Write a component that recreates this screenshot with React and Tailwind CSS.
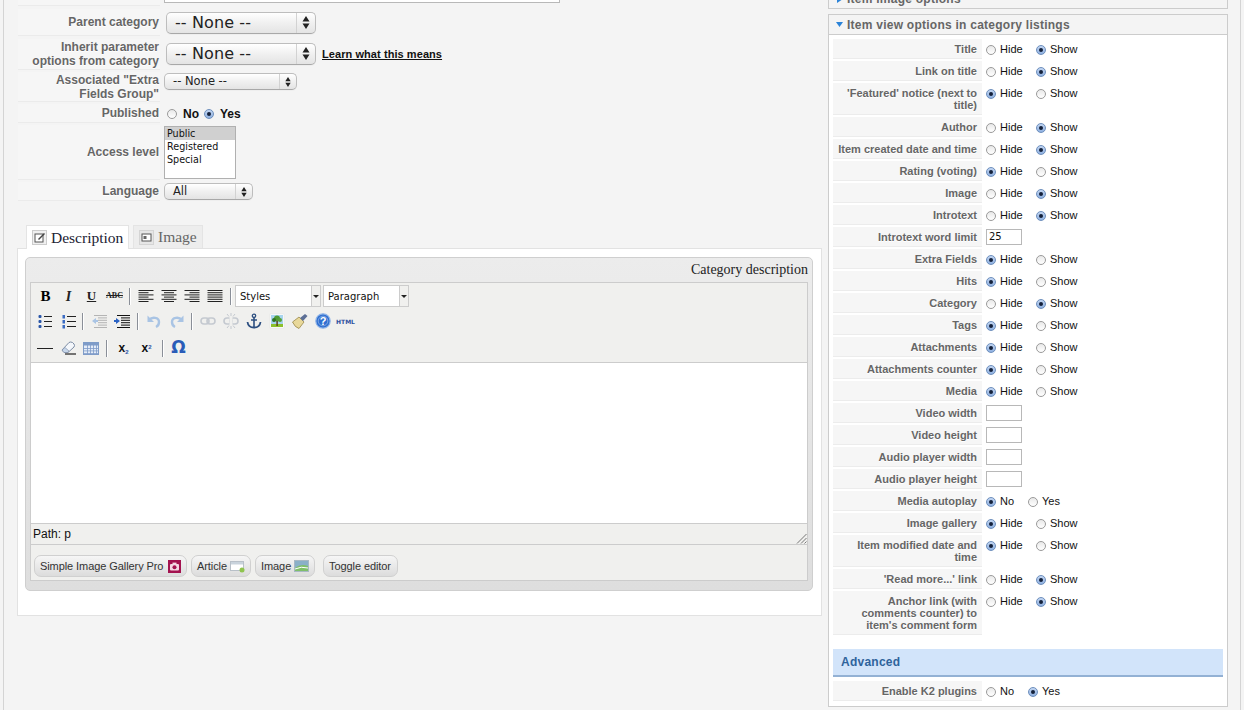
import React from "react";

const sans = "font-['Liberation_Sans',Arial,sans-serif]";
const serif = "font-['Liberation_Serif','Times_New_Roman',serif]";
const lucida = "font-['DejaVu_Sans',sans-serif]";

function Radio({ on }) {
  return (
    <span className={`inline-flex items-center justify-center w-[10px] h-[10px] rounded-full border shrink-0 mt-px ${on ? "border-[#6d8fbd] bg-gradient-to-b from-[#c3d6f2] to-[#8fb0e0]" : "border-[#9a9a9a] bg-gradient-to-b from-[#e9e9e9] to-white"}`}>
      {on && <span className="w-[4px] h-[4px] rounded-full bg-[#14213a]" />}
    </span>
  );
}

function Arrows({ small }) {
  return (
    <svg width="8" height={small ? 10 : 13} viewBox="0 0 8 13">
      <path d="M4 0 L7.5 5.5 H0.5 Z M4 13 L0.5 7.5 H7.5 Z" fill="#222" />
    </svg>
  );
}

function MacSelect({ text, w, h, arrowW, textCls, pl }) {
  return (
    <div style={{ width: w, height: h }} className={`flex shrink-0 items-stretch rounded-[5px] border border-[#bdbdbd] border-b-[#a8a8a8] bg-gradient-to-b from-white via-[#f0f0f0] to-[#e4e4e4] shadow-[0_1px_0_#eee] ${lucida}`}>
      <div style={{ paddingLeft: pl }} className={`flex-1 flex items-center text-[#222] ${textCls}`}>{text}</div>
      <div style={{ width: arrowW }} className="border-l border-[#d2d2d2] flex items-center justify-center">
        <Arrows small={h < 20} />
      </div>
    </div>
  );
}

function LeftRow({ label, h, mb, children }) {
  return (
    <div style={{ height: h, marginBottom: mb }} className="flex">
      <div className="w-[142px] shrink-0 flex items-center justify-end text-right pr-[1px] text-[12px] leading-[14px] font-bold text-[#666] bg-[#f6f6f6] border-b border-[#ebebeb] [text-shadow:0_1px_0_#fff]">
        <span>{label}</span>
      </div>
      <div className="flex items-center flex-1 pl-[4px]">{children}</div>
    </div>
  );
}

const I = ({ children, w = 16, h = 16, vb }) => (
  <svg width={w} height={h} viewBox={vb || `0 0 ${w} ${h}`}>{children}</svg>
);

function AlignIcon({ kind }) {
  const long = 15;
  const rows = [0, 1, 2, 3, 4, 5].map((i) => {
    const short = i % 2 === 1 ? 10 : long;
    let x = 0.5;
    let w = long;
    if (kind === "left") w = short;
    if (kind === "center") { w = short; x = 0.5 + (long - short) / 2; }
    if (kind === "right") { w = short; x = 0.5 + long - short; }
    return <rect key={i} x={x} y={2 + i * 2.2} width={w} height="1" fill="#222" />;
  });
  return <I>{rows}</I>;
}

const Bullets = () => (
  <I>
    {[2, 7, 12].map((y) => (
      <g key={y}>
        <rect x="1.5" y={y} width="3" height="3" rx="1" fill="#2a56a8" />
        <rect x="7" y={y + 1} width="8" height="1" fill="#222" />
      </g>
    ))}
  </I>
);
const Numbers = () => (
  <I>
    {[2, 7, 12].map((y) => (
      <g key={y}>
        <rect x="2.5" y={y} width="2.5" height="3.5" fill="#3b6cc4" />
        <rect x="7" y={y + 1} width="9" height="1" fill="#222" />
      </g>
    ))}
  </I>
);
const Indent = ({ out }) => {
  const c = out ? "#b4b4b4" : "#111";
  const a = out ? "#a9c4e4" : "#2a62c4";
  return (
    <I>
      {[2, 4.4, 6.8, 9.2, 11.6, 14].map((y, i) => (
        <rect key={y} x={i > 0 && i < 5 ? 7 : 3} y={y} width={i > 0 && i < 5 ? 9 : 13} height="1" fill={c} />
      ))}
      {out ? <path d="M1 8 L5 5 V7 H7 V9 H5 V11 Z" fill={a} /> : <path d="M6 8 L2 5 V7 H0 V9 H2 V11 Z" fill={a} />}
    </I>
  );
};
const Undo = ({ flip }) => (
  <I>
    <g transform={flip ? "matrix(-1 0 0 1 16 0)" : undefined}>
      <path d="M3 7 C6 3.5 13 4 13 9 C13 11 12 13 10 14" fill="none" stroke="#a9c4e4" strokeWidth="2.4" />
      <path d="M1.5 2.5 V9 H8 Z" fill="#a9c4e4" />
    </g>
  </I>
);
const LinkI = ({ broken }) => (
  <I>
    <rect x="1" y="5" width="8" height="6" rx="3" fill="none" stroke="#c4c9d0" strokeWidth="1.6" />
    <rect x="7" y="5" width="8" height="6" rx="3" fill="none" stroke="#c4c9d0" strokeWidth="1.6" />
    {broken && <path d="M8 0 V3 M4 1 L6 3.5 M12 1 L10 3.5 M8 13 V16 M4 15 L6 12.5 M12 15 L10 12.5" stroke="#c4c9d0" strokeWidth="1" />}
    {broken && <rect x="6.5" y="4" width="3" height="8" fill="#f0f0ee" />}
  </I>
);
const AnchorI = () => (
  <I>
    <circle cx="8" cy="2.8" r="1.7" fill="none" stroke="#2d4f80" strokeWidth="1.3" />
    <path d="M8 4.5 V14.5 M5 7 H11" stroke="#2d4f80" strokeWidth="1.6" />
    <path d="M1.5 9 C2 13 5 14.5 8 14.5 C11 14.5 14 13 14.5 9" fill="none" stroke="#2d4f80" strokeWidth="1.8" />
  </I>
);
const ImageI = () => (
  <I w={16} h={16}>
    <rect x="1" y="1" width="14" height="14" fill="#fff" stroke="#ddd" strokeWidth="0.5" />
    <rect x="2" y="2" width="12" height="9" fill="#a8d4ee" />
    <rect x="2" y="11" width="12" height="3" fill="#8cc02c" />
    <circle cx="8" cy="5.5" r="3" fill="#4f9a32" />
    <circle cx="5" cy="7" r="2" fill="#2f7222" />
    <circle cx="11" cy="7" r="2" fill="#56a036" />
    <rect x="7.4" y="8" width="1.4" height="5" fill="#5a3a1a" />
  </I>
);
const Brush = () => (
  <I>
    <path d="M0.5 9 L7 4 L12 9 L7 15.5 Q3 14.5 0.5 9 Z" fill="#e8d89a" stroke="#8c7a3a" strokeWidth="0.7" />
    <path d="M8 5 L13 1 L15.5 3 L11 8 Z" fill="#5c6f96" />
  </I>
);
const Help = () => (
  <I>
    <circle cx="8" cy="8" r="7.2" fill="#2f6fd0" stroke="#8fb4e8" strokeWidth="1.2" />
    <circle cx="8" cy="8" r="4.8" fill="none" stroke="#fff" strokeWidth="0.6" opacity="0.6" />
    <text x="8" y="11.8" textAnchor="middle" fontSize="11" fontWeight="700" fill="#fff" fontFamily="Liberation Sans">?</text>
  </I>
);
const Eraser = () => (
  <I>
    <path d="M2 10 L9 2.5 Q10.5 1.5 12.5 2.5 L14 4 Q15 5.5 14 7 L8 12.5 H4 Z" fill="#f4f7fb" stroke="#7c8ca4" strokeWidth="1" />
    <path d="M2 10 L5 7.5 L9 11 L7.5 12.5 H4 Z" fill="#c6d6ea" stroke="#7c8ca4" strokeWidth="0.6" />
    <rect x="5" y="13.4" width="11" height="1.2" fill="#222" />
  </I>
);
const TableI = () => (
  <I>
    <rect x="0.5" y="2.5" width="15" height="12" fill="#e4ecf8" stroke="#7f9cc8" />
    <rect x="0.5" y="2.5" width="15" height="3" fill="#7f9cc8" />
    {[4, 7, 10, 13].map((x) => <rect key={x} x={x} y="3" width="0.8" height="11" fill="#7f9cc8" />)}
    {[8, 10.5, 13].map((y) => <rect key={y} x="1" y={y} width="14" height="0.8" fill="#7f9cc8" />)}
  </I>
);

const Cell = ({ children, w = 23 }) => (
  <div style={{ width: w }} className="h-[22px] shrink-0 flex items-center justify-center">{children}</div>
);
const Sep = ({ w = 9 }) => (
  <div style={{ width: w }} className="h-[22px] shrink-0 flex items-center justify-center">
    <div className="w-px h-[17px] bg-[#8a8f98] border-r border-white box-content" />
  </div>
);

function EdSelect({ text, w, ml = 0 }) {
  return (
    <div style={{ width: w, marginLeft: ml }} className="h-[22px] flex shrink-0 bg-white border border-[#cccccc]">
      <div className={`flex-1 flex items-center pl-[4px] text-[10px] text-[#111] ${lucida}`}>{text}</div>
      <div className="w-[9px] bg-[#f0f0ee] border-l border-[#cccccc] flex items-center justify-center">
        <svg width="6" height="3" viewBox="0 0 6 3"><path d="M0 0 H6 L3 3 Z" fill="#222" /></svg>
      </div>
    </div>
  );
}

function MiniBtn({ text, w, ml = 0, icon }) {
  return (
    <div style={{ width: w, marginLeft: ml }} className={`h-[22px] shrink-0 flex items-center justify-between px-[5px] whitespace-nowrap rounded-[7px] border border-[#d0d0d0] bg-gradient-to-b from-[#f6f6f6] to-[#dcdcdc] text-[11px] tracking-[-0.08px] text-[#333] ${sans}`}>
      <span>{text}</span>
      {icon}
    </div>
  );
}

function Toolbar() {
  return (
    <div className="pl-[2px] pt-[2px] h-[80px] flex flex-col gap-[4px] border-b border-[#cccccc]">
      <div className="flex items-center ml-px">
        <Cell><span className={`text-[15px] font-bold text-black ${serif}`}>B</span></Cell>
        <Cell><span className={`text-[14px] font-bold italic text-[#222] ${serif}`}>I</span></Cell>
        <Cell><span className={`text-[13px] font-bold underline text-[#222] ${serif}`}>U</span></Cell>
        <Cell><span className={`text-[8px] font-bold line-through text-[#222] ${serif}`}>ABC</span></Cell>
        <Sep w={8} />
        <Cell><AlignIcon kind="left" /></Cell>
        <Cell><AlignIcon kind="center" /></Cell>
        <Cell><AlignIcon kind="right" /></Cell>
        <Cell><AlignIcon kind="full" /></Cell>
        <Sep w={9} />
        <EdSelect text="Styles" w={86} />
        <EdSelect text="Paragraph" w={86} ml={2} />
      </div>
      <div className="flex items-center -mt-px">
        <Cell><Bullets /></Cell>
        <Cell><Numbers /></Cell>
        <Sep w={8} />
        <Cell><Indent out /></Cell>
        <Cell><Indent /></Cell>
        <Sep w={9} />
        <Cell><Undo /></Cell>
        <Cell><Undo flip /></Cell>
        <Sep w={8} />
        <Cell><LinkI /></Cell>
        <Cell><LinkI broken /></Cell>
        <Cell><AnchorI /></Cell>
        <Cell><ImageI /></Cell>
        <Cell><Brush /></Cell>
        <Cell><Help /></Cell>
        <Cell><span className={`text-[6px] font-bold text-[#2d4f9e] ${lucida}`}>HTML</span></Cell>
      </div>
      <div className="flex items-center mt-px">
        <Cell><div className="w-[16px] h-px bg-[#222]" /></Cell>
        <Cell><Eraser /></Cell>
        <Cell><TableI /></Cell>
        <Sep w={10} />
        <Cell><span className={`text-[12px] font-bold text-[#111] ${sans}`}>x<sub className="text-[6px] text-[#2a56a8]">2</sub></span></Cell>
        <Cell><span className={`text-[12px] font-bold text-[#111] ${sans}`}>x<sup className="text-[6px] text-[#2a56a8]">2</sup></span></Cell>
        <Sep w={9} />
        <Cell><span className={`text-[17px] font-bold text-[#2a5cb8] ${lucida}`}>Ω</span></Cell>
      </div>
    </div>
  );
}

function Editor() {
  return (
    <div className="ml-[7px] mr-[8px] mt-[8px] h-[334px] rounded-[5px] border border-[#cfcfcf] bg-gradient-to-b from-[#ececec] to-[#dedede] px-[4px] flex flex-col">
      <div className={`h-[24px] pb-[2px] shrink-0 flex items-center justify-end text-[14px] text-[#222] ${serif}`}>Category description</div>
      <div className="h-[299px] border border-[#cccccc] bg-[#f0f0ee] flex flex-col">
        <Toolbar />
        <div className="h-[161px] bg-white border-b border-[#cccccc]" />
        <div className={`h-[21px] relative flex items-center pl-[2px] text-[12px] text-[#111] border-b border-[#cccccc] ${sans}`}>
          Path: p
          <svg className="absolute right-0 bottom-0" width="11" height="11" viewBox="0 0 11 11">
            <path d="M10.5 1 L1 10.5 M10.5 5 L5 10.5 M10.5 8.5 L8.5 10.5" stroke="#777" strokeWidth="1" />
          </svg>
        </div>
        <div className="flex items-start pl-[3px] pt-[10px]">
          <MiniBtn text="Simple Image Gallery Pro" w={153} icon={
            <svg width="13" height="13" viewBox="0 0 13 13"><rect width="13" height="13" fill="#a3124f" /><rect x="2" y="4" width="9" height="6.5" rx="1" fill="#f3d7e2" /><rect x="4.5" y="2.6" width="4" height="2" fill="#f3d7e2" /><circle cx="6.5" cy="7.2" r="2" fill="#a3124f" /></svg>
          } />
          <MiniBtn text="Article" w={60} ml={4} icon={
            <svg width="15" height="14" viewBox="0 0 15 14"><rect x="0.5" y="2.5" width="13" height="9" fill="#fff" stroke="#b8c0c8" /><rect x="1" y="3" width="12" height="2.5" fill="#c9d3dc" /><circle cx="12" cy="11" r="2.5" fill="#8fc44f" /></svg>
          } />
          <MiniBtn text="Image" w={60} ml={4} icon={
            <svg width="15" height="13" viewBox="0 0 15 13"><rect x="0.5" y="0.5" width="14" height="11" fill="#8ab0c8" stroke="#a8b8c4" /><path d="M1 8 Q7 3 14 6 V11 H1 Z" fill="#7fbf6a" /><path d="M1 9 Q7 6 14 8" fill="none" stroke="#fff" strokeWidth="1" /></svg>
          } />
          <MiniBtn text="Toggle editor" w={75} ml={8} />
        </div>
      </div>
    </div>
  );
}

function Left() {
  return (
    <div className={`w-[805px] shrink-0 ${sans}`}>
      <div className="ml-px -mt-[14px]">
        <LeftRow h={20} mb={3} label="">
          <div className="w-[396px] h-[17px] -mt-[3px] border border-[#b8b8b8] bg-white text-[12px] pl-[3px] leading-[9px] text-[#222] overflow-hidden">
            Sample category
          </div>
        </LeftRow>
        <LeftRow h={27} mb={3} label="Parent category">
          <div className="pl-[2px]"><MacSelect text="-- None --" w={150} h={22} arrowW={19} pl={8} textCls="text-[16px] tracking-[0.1px]" /></div>
        </LeftRow>
        <LeftRow h={31} mb={2} label={<>Inherit parameter<br />options from category</>}>
          <div className="pl-[2px] flex items-center -mt-[2px]">
            <MacSelect text="-- None --" w={150} h={22} arrowW={19} pl={8} textCls="text-[16px] tracking-[0.1px]" />
            <a className="ml-[6px] mt-px text-[11px] tracking-[0.07px] font-bold underline text-[#111]">Learn what this means</a>
          </div>
        </LeftRow>
        <LeftRow h={30} mb={2} label={<>Associated "Extra<br />Fields Group"</>}>
          <div className="-mt-[11px]"><MacSelect text="-- None --" w={133} h={17} arrowW={17} pl={8} textCls="text-[11.5px]" /></div>
        </LeftRow>
        <LeftRow h={19} mb={2} label="Published">
          <div className="flex items-center pl-[3px] text-[12px] font-bold text-[#111]">
            <Radio /><span className="ml-[6px]">No</span>
            <span className="ml-[5px] flex"><Radio on /></span><span className="ml-[6px]">Yes</span>
          </div>
        </LeftRow>
        <LeftRow h={55} mb={2} label="Access level">
          <div className={`w-[72px] h-[53px] border border-[#b0b0b0] bg-white text-[9.6px] leading-[13px] text-[#111] ${lucida}`}>
            <div className="bg-[#d0d0d0] pl-[2px]">Public</div>
            <div className="pl-[2px]">Registered</div>
            <div className="pl-[2px]">Special</div>
          </div>
        </LeftRow>
        <LeftRow h={19} mb={0} label="Language">
          <MacSelect text="All" w={89} h={17} arrowW={17} pl={8} textCls="text-[11.5px]" />
        </LeftRow>
      </div>

      <div className="mt-[24px] flex pl-[9px] items-end h-[23px]">
        <div className={`w-[103px] h-[24px] -mb-px relative z-10 flex items-center gap-[4px] pl-[5px] whitespace-nowrap bg-white border border-b-0 border-[#e4e4e4] text-[15.5px] text-[#223] ${serif}`}>
          <svg width="15" height="15" viewBox="0 0 15 15"><rect x="0.5" y="0.5" width="14" height="14" fill="#f0f0f0" stroke="#ccc" /><rect x="3" y="4" width="8" height="8" fill="#fff" stroke="#555" /><path d="M6 9 L12 3 L13 4 L7 10 Z" fill="#444" /></svg>
          Description
        </div>
        <div className={`w-[70px] h-[23px] ml-[4px] flex items-center gap-[4px] pl-[5px] bg-[#ededed] border border-b-0 border-[#e4e4e4] text-[15.5px] text-[#666] ${serif}`}>
          <svg width="15" height="15" viewBox="0 0 15 15"><rect x="0.5" y="0.5" width="14" height="14" fill="#e6e6e6" stroke="#d4d4d4" /><rect x="3" y="4" width="9" height="7" fill="#fff" stroke="#555" /><rect x="4.5" y="6" width="3" height="3" fill="#666" /></svg>
          Image
        </div>
      </div>
      <div className="h-[368px] bg-white border border-[#e2e2e2]">
        <Editor />
      </div>
    </div>
  );
}

const H = "hs";
const rows = [
  ["Title", H, 1],
  ["Link on title", H, 1],
  ["'Featured' notice (next to title)", H, 0],
  ["Author", H, 1],
  ["Item created date and time", H, 1],
  ["Rating (voting)", H, 0],
  ["Image", H, 1],
  ["Introtext", H, 1],
  ["Introtext word limit", "input", "25"],
  ["Extra Fields", H, 0],
  ["Hits", H, 0],
  ["Category", H, 1],
  ["Tags", H, 0],
  ["Attachments", H, 0],
  ["Attachments counter", H, 0],
  ["Media", H, 0],
  ["Video width", "input", ""],
  ["Video height", "input", ""],
  ["Audio player width", "input", ""],
  ["Audio player height", "input", ""],
  ["Media autoplay", "ny", 0],
  ["Image gallery", H, 0],
  ["Item modified date and time", H, 0],
  ["'Read more...' link", H, 1],
  ["Anchor link (with comments counter) to item's comment form", H, 1],
];

function RightRow({ label, type, val }) {
  const opts = type === "ny" ? ["No", "Yes"] : ["Hide", "Show"];
  return (
    <div className="flex mb-[2px]">
      <div className="w-[149px] shrink-0 pt-[4px] pb-[3px] pl-[2px] pr-[5px] text-right text-[11px] leading-[12px] font-bold text-[#666] bg-[#f6f6f6] border-b border-[#ececec] [text-shadow:0_1px_0_#fff]">
        {label}
      </div>
      <div className="pl-[4px]">
        {type === "input" ? (
          <div className={`w-[36px] h-[16px] mt-[2px] border border-[#b8b8b8] bg-white text-[10px] leading-[14px] pl-[2px] text-[#111] ${lucida}`}>{val}</div>
        ) : (
          <div className="flex items-center h-[20px] text-[11px] text-[#111]">
            <Radio on={val === 0} />
            <span className={`ml-[4px] ${type === "ny" ? "w-[28px]" : "w-[36px]"}`}>{opts[0]}</span>
            <Radio on={val === 1} />
            <span className="ml-[4px]">{opts[1]}</span>
          </div>
        )}
      </div>
    </div>
  );
}

function Right() {
  return (
    <div className={`w-[400px] shrink-0 ml-[6px] ${sans}`}>
      <div className="-mt-[11px] h-[20px] border border-[#cccccc] bg-[#f4f4f4] flex items-center pl-[8px] gap-[4px] text-[12px] tracking-[0.25px] font-bold text-[#666]">
        <svg width="6" height="8" viewBox="0 0 6 8"><path d="M0 0 L6 4 L0 8 Z" fill="#2b83d8" /></svg>
        Item image options
      </div>
      <div className="mt-[5px] h-[693px] border border-[#cccccc] bg-white">
        <div className="h-[20px] bg-[#f4f4f4] border-b border-[#cccccc] flex items-center pl-[7px] gap-[4px] text-[12px] tracking-[0.25px] font-bold text-[#666]">
          <svg width="7" height="5" viewBox="0 0 7 5"><path d="M0 0 H7 L3.5 5 Z" fill="#2b83d8" /></svg>
          Item view options in category listings
        </div>
        <div className="pl-[4px] pr-[4px] pt-[4px]">
          {rows.map((r) => <RightRow key={r[0]} label={r[0]} type={r[1]} val={r[2]} />)}
          <div className="mt-[14px] h-[28px] bg-[#d2e4fa] border-b-[2px] border-[#93b1d4] flex items-center pl-[8px] text-[12px] font-bold text-[#2f639c] tracking-[0.25px]">Advanced</div>
          <div className="mt-[4px]"><RightRow label="Enable K2 plugins" type="ny" val={1} /></div>
        </div>
      </div>
    </div>
  );
}

export default function App() {
  return (
    <div className="w-[1244px] h-[710px] overflow-hidden bg-[#f4f4f4]">
      <div className="ml-[3px] w-[1238px] h-[710px] border-l border-r border-[#d4d4d4] pl-[13px] flex items-start">
        <Left />
        <Right />
      </div>
    </div>
  );
}
